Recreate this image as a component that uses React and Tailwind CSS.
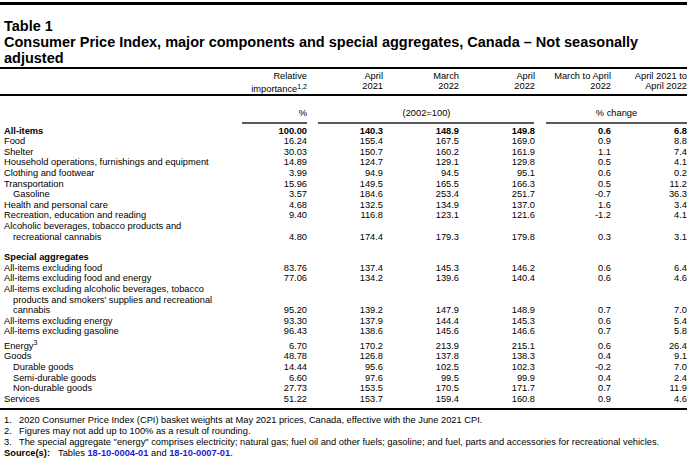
import React from "react";

const mainRows = [
  { label: "All-items", v: ["100.00", "140.3", "148.9", "149.8", "0.6", "6.8"], bold: true },
  { label: "Food", v: ["16.24", "155.4", "167.5", "169.0", "0.9", "8.8"] },
  { label: "Shelter", v: ["30.03", "150.7", "160.2", "161.9", "1.1", "7.4"] },
  { label: "Household operations, furnishings and equipment", v: ["14.89", "124.7", "129.1", "129.8", "0.5", "4.1"] },
  { label: "Clothing and footwear", v: ["3.99", "94.9", "94.5", "95.1", "0.6", "0.2"] },
  { label: "Transportation", v: ["15.96", "149.5", "165.5", "166.3", "0.5", "11.2"] },
  { label: "Gasoline", v: ["3.57", "184.6", "253.4", "251.7", "-0.7", "36.3"], indent: true },
  { label: "Health and personal care", v: ["4.68", "132.5", "134.9", "137.0", "1.6", "3.4"] },
  { label: "Recreation, education and reading", v: ["9.40", "116.8", "123.1", "121.6", "-1.2", "4.1"] },
  { label: "Alcoholic beverages, tobacco products and" },
  { label: "recreational cannabis", v: ["4.80", "174.4", "179.3", "179.8", "0.3", "3.1"], indent: true },
];

const specialRows = [
  { label: "All-items excluding food", v: ["83.76", "137.4", "145.3", "146.2", "0.6", "6.4"] },
  { label: "All-items excluding food and energy", v: ["77.06", "134.2", "139.6", "140.4", "0.6", "4.6"] },
  { label: "All-items excluding alcoholic beverages, tobacco" },
  { label: "products and smokers' supplies and recreational", indent: true },
  { label: "cannabis", v: ["95.20", "139.2", "147.9", "148.9", "0.7", "7.0"], indent: true },
  { label: "All-items excluding energy", v: ["93.30", "137.9", "144.4", "145.3", "0.6", "5.4"] },
  { label: "All-items excluding gasoline", v: ["96.43", "138.6", "145.6", "146.6", "0.7", "5.8"] },
  { label: "Energy", sup: "3", v: ["6.70", "170.2", "213.9", "215.1", "0.6", "26.4"], tall: true },
  { label: "Goods", v: ["48.78", "126.8", "137.8", "138.3", "0.4", "9.1"] },
  { label: "Durable goods", v: ["14.44", "95.6", "102.5", "102.3", "-0.2", "7.0"], indent: true },
  { label: "Semi-durable goods", v: ["6.60", "97.6", "99.5", "99.9", "0.4", "2.4"], indent: true },
  { label: "Non-durable goods", v: ["27.73", "153.5", "170.5", "171.7", "0.7", "11.9"], indent: true },
  { label: "Services", v: ["51.22", "153.7", "159.4", "160.8", "0.9", "4.6"] },
];

const grid = "grid grid-cols-[231px_repeat(6,76px)]";

function Row({ r }) {
  return (
    <div className={`${grid} leading-[10.6px] ${r.bold ? "font-bold" : ""} ${r.tall ? "pt-[4px]" : ""}`}>
      <div className={`whitespace-nowrap ${r.indent ? "pl-[13px]" : "pl-[4px]"}`}>
        {r.label}
        {r.sup && <sup className="text-[7px]">{r.sup}</sup>}
      </div>
      {(r.v || ["", "", "", "", "", ""]).map((x, i) => (
        <div key={i} className="text-right">
          {x}
        </div>
      ))}
    </div>
  );
}

function Head({ a, b }) {
  return (
    <div className="text-right leading-[10px]">
      <div>{a}</div>
      <div>{b}</div>
    </div>
  );
}

export default function App() {
  return (
    <div className="h-[463px] w-[690px] overflow-hidden bg-white text-[9.3px] text-black font-['Liberation_Sans',Arial,sans-serif]">
      <div className="w-[687px]">
        <div className="mt-[2px] h-[3px] bg-black" />
        <div className="border-b-2 border-black px-[4px] pt-[13px] pb-[1px] text-[14.5px] font-bold leading-[16px] whitespace-nowrap">
          <div>Table 1</div>
          <div>Consumer Price Index, major components and special aggregates, Canada – Not seasonally</div>
          <div>adjusted</div>
        </div>

        <div className={`${grid} border-b-2 border-black pt-[2px]`}>
          <div />
          <div className="text-right leading-[10px]">
            <div>Relative</div>
            <div className="pt-[3px]">
              importance<sup className="text-[7px]">1,2</sup>
            </div>
          </div>
          <Head a="April" b="2021" />
          <Head a="March" b="2022" />
          <Head a="April" b="2022" />
          <Head a="March to April" b="2022" />
          <Head a="April 2021 to" b="April 2022" />
        </div>

        <div className={`${grid} pt-[12px] leading-[10.6px]`}>
          <div />
          <div className="text-right">%</div>
          <div className="col-span-3 pl-[11px] text-center">(2002=100)</div>
          <div className="col-span-2 pl-[11px] text-center">% change</div>
        </div>

        <div className={`${grid} pt-[3px] pb-[2px]`}>
          <div />
          <div className="pl-[11px]">
            <div className="h-[2px] bg-[#5a5a5a]" />
          </div>
          <div className="col-span-3 pl-[11px] pr-[1px]">
            <div className="h-[2px] bg-[#5a5a5a]" />
          </div>
          <div className="col-span-2 pl-[11px]">
            <div className="h-[2px] bg-[#5a5a5a]" />
          </div>
        </div>

        {mainRows.map((r, i) => (
          <Row key={i} r={r} />
        ))}

        <div className="h-[10px]" />
        <div className="pl-[4px] font-bold leading-[10.6px]">Special aggregates</div>

        {specialRows.map((r, i) => (
          <Row key={i} r={r} />
        ))}

        <div className="mt-[4px] h-[2px] bg-black" />

        <div className="pt-[5px] leading-[10.7px] whitespace-nowrap">
          <div className="flex pl-[4px]">
            <span className="w-[15px]">1.</span>
            <span>2020 Consumer Price Index (CPI) basket weights at May 2021 prices, Canada, effective with the June 2021 CPI.</span>
          </div>
          <div className="flex pl-[4px]">
            <span className="w-[15px]">2.</span>
            <span>Figures may not add up to 100% as a result of rounding.</span>
          </div>
          <div className="flex pl-[4px]">
            <span className="w-[15px]">3.</span>
            <span>
              The special aggregate "energy" comprises electricity; natural gas; fuel oil and other fuels; gasoline; and fuel, parts and accessories for recreational vehicles.
            </span>
          </div>
          <div className="pl-[4px]">
            <span className="font-bold">Source(s):</span>
            <span className="ml-[8px]">Tables </span>
            <span className="font-bold text-[#1c1cd6]">18-10-0004-01</span>
            <span> and </span>
            <span className="font-bold text-[#1c1cd6]">18-10-0007-01</span>
            <span>.</span>
          </div>
        </div>
      </div>
    </div>
  );
}
